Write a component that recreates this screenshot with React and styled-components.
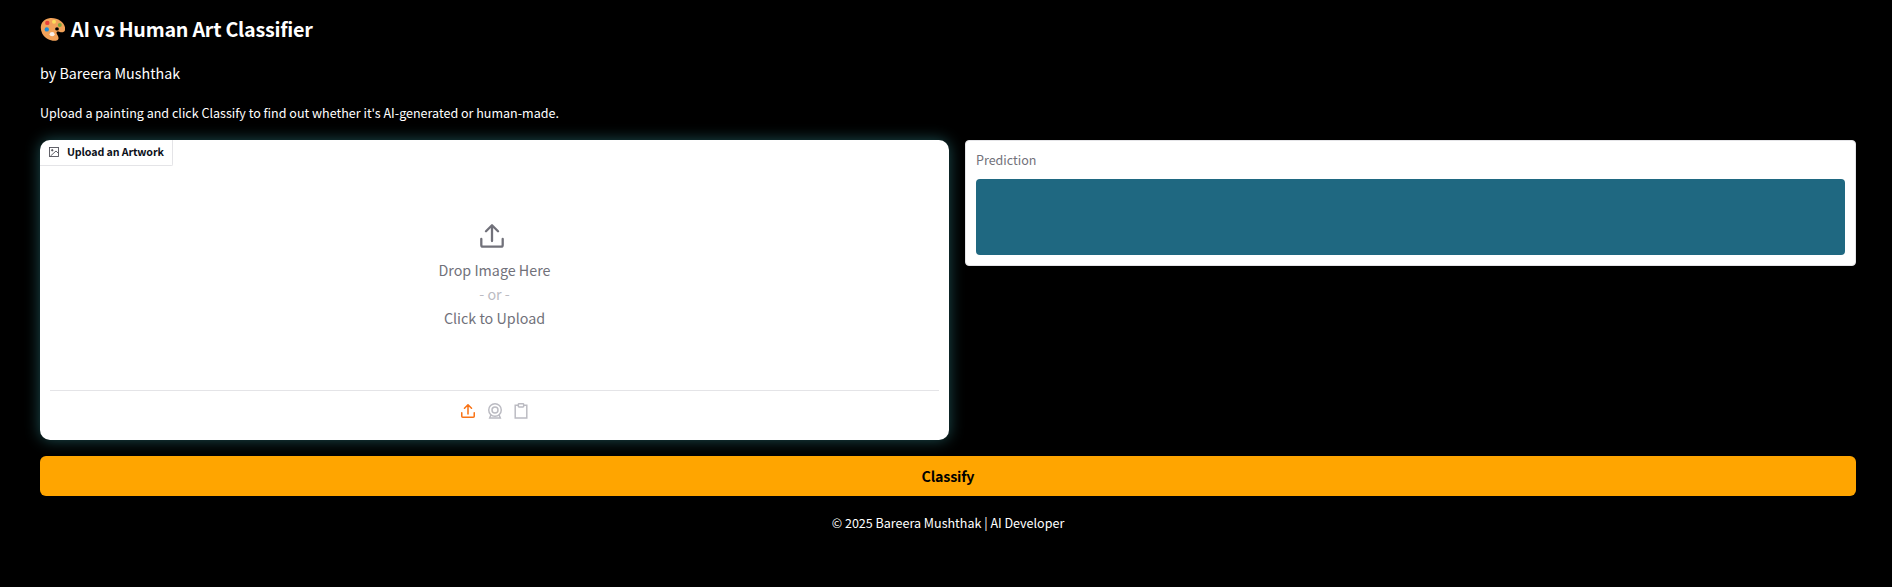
import React from "react";
import styled, { createGlobalStyle } from "styled-components";

const Global = createGlobalStyle`
  *, *::before, *::after { box-sizing: border-box; }
  html, body { margin: 0; background: #000; }
  body { font-family: "Source Sans Pro", "Noto Sans CJK SC", sans-serif; color: #fff; }
  h1, h3, p { margin: 0; }
`;

const Page = styled.main`
  display: flex;
  flex-direction: column;
  gap: 16px;
  min-height: 587px;
  padding: 16px 36px 0 40px;
  background: #000;
`;

const Heading = styled.header`
  display: flex;
  flex-direction: column;
`;

const Title = styled.h1`
  display: flex;
  align-items: center;
  gap: 6px;
  height: 26px;
  font-size: 19.7px;
  font-weight: 700;
  line-height: 26px;
  white-space: nowrap;
`;

const TitleText = styled.span`
  letter-spacing: -0.24px;
`;

const Byline = styled.h3`
  height: 24px;
  margin-top: 19px;
  font-size: 14.3px;
  font-weight: 400;
  line-height: 24px;
`;

const Intro = styled.p`
  height: 21px;
  margin: 17px 0 1px;
  font-size: 12.54px;
  line-height: 21px;
`;

const Columns = styled.section`
  display: grid;
  grid-template-columns: 909px 1fr;
  gap: 16px;
  align-items: start;
`;

const UploadPanel = styled.div`
  display: flex;
  flex-direction: column;
  height: 300px;
  overflow: hidden;
  border-radius: 10px;
  background: #fff;
  box-shadow: 0 0 15px #1d4f52;
`;

const PanelLabel = styled.div`
  display: flex;
  align-items: center;
  gap: 8.5px;
  width: 133px;
  height: 26px;
  padding: 0 0 2px 8.5px;
  border: solid #e4e4e7;
  border-width: 0 1px 1px 0;
  border-bottom-right-radius: 2px;
  color: #0b0f19;
  font-size: 10.7px;
  font-weight: 700;
  letter-spacing: -0.13px;
  line-height: 20px;
  white-space: nowrap;
  svg { color: #52525b; margin-top: 1px; }
`;

const DropZone = styled.div`
  display: flex;
  flex: 1;
  flex-direction: column;
  align-items: center;
  padding-top: 58px;
  color: #71717a;
  font-size: 14.3px;
  line-height: 24px;
  svg { margin: 0 5px 10px 0; }
`;

const Muted = styled.span`
  color: #bbbbc2;
`;

const Sources = styled.div`
  display: flex;
  justify-content: center;
  gap: 10.5px;
  height: 50px;
  margin: 0 10px;
  padding-top: 12px;
  border-top: 1px solid #e4e4e7;
  color: #bbbbc2;
  svg:first-child { margin: 1px 1px 0; }
`;

const ResultPanel = styled.div`
  height: 126px;
  padding: 9px 10px 10px;
  border: 1px solid #e4e4e7;
  border-radius: 4px;
  background: #fff;
`;

const ResultLabel = styled.div`
  height: 20px;
  margin-bottom: 9px;
  color: #71717a;
  font-size: 12.54px;
  line-height: 20px;
`;

const ResultBox = styled.div`
  height: 76px;
  border-radius: 4px;
  background: #1f6881;
`;

const Button = styled.button`
  height: 40px;
  padding: 0;
  border: 0;
  border-radius: 6px;
  background: #ffa500;
  color: #000;
  font: 700 14.3px/36px "Source Sans Pro", "Noto Sans CJK SC", sans-serif;
  letter-spacing: -0.2px;
`;

const Footer = styled.p`
  height: 21px;
  font-size: 12.54px;
  line-height: 21px;
  text-align: center;
`;

const Palette = () => (
  <svg width="25" height="25" viewBox="0 0 25 25">
    <path d="M9.2 1.2C17 .2 23.6 4.500 25 10.200c1.100 5-2.600 5.800-5.200 4.700-2.600-1-4 .2-2.900 2.200 1.200 2.200 2.800 4.600.4 6.100C13.300 25 5.600 22.600 2.200 16.500-1 10.400 1.200 2.300 9.200 1.200Z" fill="#f2a259" />
    <ellipse cx="17" cy="11.900" rx="1.900" ry="1.600" fill="#000" />
    <circle cx="7.300" cy="5.900" r="2.200" fill="#e8433a" />
    <circle cx="14" cy="4.800" r="2" fill="#fbdc5c" />
    <circle cx="19.800" cy="8" r="2" fill="#7da83c" />
    <circle cx="6.800" cy="12.400" r="2.200" fill="#1b8ad6" />
    <ellipse cx="12.100" cy="17.200" rx="2.500" ry="2.100" fill="#f7efe9" />
  </svg>
);

const UploadIcon = ({ size, color, weight = 2 }) => (
  <svg width={size} height={size} viewBox="0 0 24 24" fill="none" stroke={color} strokeWidth={weight} strokeLinecap="round" strokeLinejoin="round">
    <path d="M1.300 15v6a1.700 1.700 0 0 0 1.700 1.700h18a1.700 1.700 0 0 0 1.700-1.700v-6" />
    <path d="M6 7.300l6-6 6 6M12 1.300v15.700" />
  </svg>
);

const ImageIcon = () => (
  <svg width="10" height="10" viewBox="0 0 20 20" fill="none" stroke="currentColor" strokeWidth="1.800">
    <rect x="1" y="1" width="18" height="18" />
    <circle cx="6.500" cy="6.500" r="1.500" fill="currentColor" />
    <path d="M3 18 14 8l5 5" />
  </svg>
);

const WebcamIcon = () => (
  <svg width="16" height="16" viewBox="0 0 24 24" fill="none" stroke="currentColor" strokeWidth="2.200">
    <circle cx="12" cy="10.500" r="9.400" />
    <circle cx="12" cy="10.500" r="4.500" />
    <path d="M6 17.500 4 22.500h16L18 17.500" />
  </svg>
);

const ClipboardIcon = () => (
  <svg width="16" height="16" viewBox="0 0 24 24" fill="none" stroke="currentColor" strokeWidth="2.200">
    <path d="M8 3.500H3.300v19h17.400v-19H16" />
    <rect x="8" y="1.200" width="8" height="4.800" rx="1" />
  </svg>
);

export default function App() {
  return (
    <>
      <Global />
      <Page>
        <Heading>
          <Title><Palette /><TitleText>AI vs Human Art Classifier</TitleText></Title>
          <Byline>by Bareera Mushthak</Byline>
          <Intro>Upload a painting and click Classify to find out whether it's AI-generated or human-made.</Intro>
        </Heading>
        <Columns>
          <UploadPanel>
            <PanelLabel><ImageIcon /><span>Upload an Artwork</span></PanelLabel>
            <DropZone>
              <UploadIcon size={24} color="#71717a" weight={2.3} />
              <span>Drop Image Here</span>
              <Muted>- or -</Muted>
              <span>Click to Upload</span>
            </DropZone>
            <Sources>
              <UploadIcon size={14} color="#f97316" weight={2.6} />
              <WebcamIcon />
              <ClipboardIcon />
            </Sources>
          </UploadPanel>
          <ResultPanel>
            <ResultLabel>Prediction</ResultLabel>
            <ResultBox />
          </ResultPanel>
        </Columns>
        <Button>Classify</Button>
        <Footer>© 2025 Bareera Mushthak | AI Developer</Footer>
      </Page>
    </>
  );
}
